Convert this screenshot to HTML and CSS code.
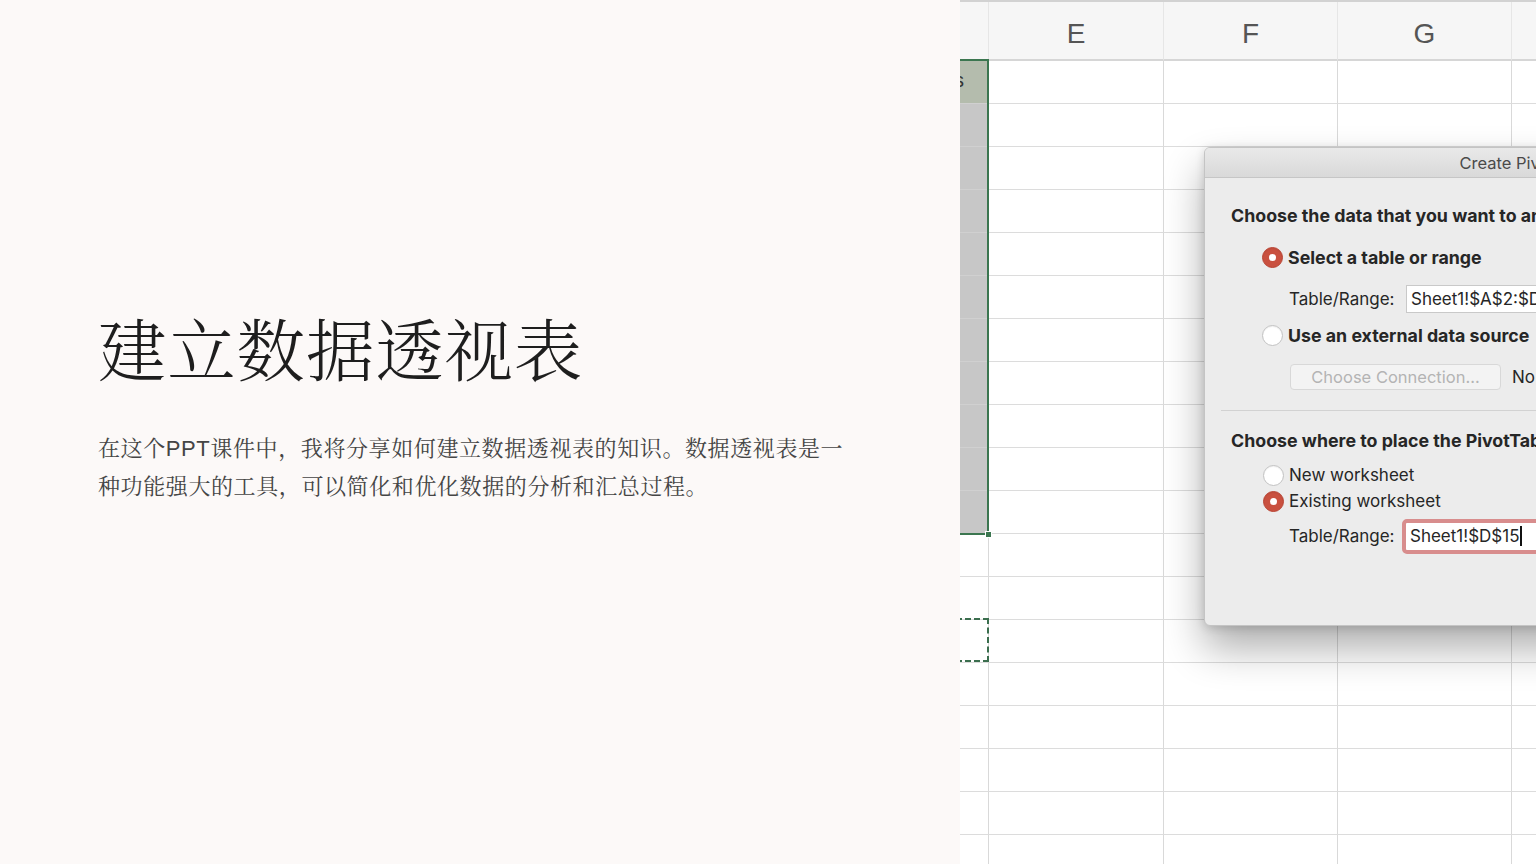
FILE: index.html
```html
<!DOCTYPE html>
<html lang="zh-CN">
<head>
<meta charset="utf-8">
<title>建立数据透视表</title>
<link rel="stylesheet" href="styles.css">
</head>
<body>
<div class="slide">
  <section class="text-panel">
    <h1 class="title">建立数据透视表</h1>
    <p class="desc">在这个PPT课件中，我将分享如何建立数据透视表的知识。数据透视表是一种功能强大的工具，可以简化和优化数据的分析和汇总过程。</p>
  </section>
  <section class="shot">
    <div class="sheet">
      <div class="hd"></div><div class="hd">E</div><div class="hd">F</div><div class="hd">G</div><div class="hd"></div>
      <div class="c sel top"><span class="cut">s</span></div><div class="c"></div><div class="c"></div><div class="c"></div><div class="c"></div>
      <div class="c sel"></div><div class="c"></div><div class="c"></div><div class="c"></div><div class="c"></div>
      <div class="c sel"></div><div class="c"></div><div class="c"></div><div class="c"></div><div class="c"></div>
      <div class="c sel"></div><div class="c"></div><div class="c"></div><div class="c"></div><div class="c"></div>
      <div class="c sel"></div><div class="c"></div><div class="c"></div><div class="c"></div><div class="c"></div>
      <div class="c sel"></div><div class="c"></div><div class="c"></div><div class="c"></div><div class="c"></div>
      <div class="c sel"></div><div class="c"></div><div class="c"></div><div class="c"></div><div class="c"></div>
      <div class="c sel"></div><div class="c"></div><div class="c"></div><div class="c"></div><div class="c"></div>
      <div class="c sel"></div><div class="c"></div><div class="c"></div><div class="c"></div><div class="c"></div>
      <div class="c sel"></div><div class="c"></div><div class="c"></div><div class="c"></div><div class="c"></div>
      <div class="c sel"></div><div class="c"></div><div class="c"></div><div class="c"></div><div class="c"></div>
      <div class="c"></div><div class="c"></div><div class="c"></div><div class="c"></div><div class="c"></div>
      <div class="c"></div><div class="c"></div><div class="c"></div><div class="c"></div><div class="c"></div>
      <div class="c"></div><div class="c"></div><div class="c"></div><div class="c"></div><div class="c"></div>
      <div class="c"></div><div class="c"></div><div class="c"></div><div class="c"></div><div class="c"></div>
      <div class="c"></div><div class="c"></div><div class="c"></div><div class="c"></div><div class="c"></div>
      <div class="c"></div><div class="c"></div><div class="c"></div><div class="c"></div><div class="c"></div>
      <div class="c"></div><div class="c"></div><div class="c"></div><div class="c"></div><div class="c"></div>
      <div class="c"></div><div class="c"></div><div class="c"></div><div class="c"></div><div class="c"></div>
    </div>
    <div class="selection"><span class="handle"></span></div>
    <div class="marquee"></div>

    <div class="dialog">
      <div class="dlg-title">Create PivotTable</div>
      <div class="dlg-body">
        <div class="dlg-heading h1">Choose the data that you want to analyze</div>
        <div class="radio-row r1"><span class="radio on"></span><span class="bold">Select a table or range</span></div>
        <div class="field-row f1"><span class="flabel">Table/Range:</span><span class="input">Sheet1!$A$2:$D$11</span></div>
        <div class="radio-row r2"><span class="radio"></span><span class="bold">Use an external data source</span></div>
        <div class="btn-row"><span class="btn">Choose Connection...</span><span class="note">No data fields have been retrieved.</span></div>
        <div class="sep"></div>
        <div class="dlg-heading h2">Choose where to place the PivotTable report</div>
        <div class="radio-row r3"><span class="radio"></span><span>New worksheet</span></div>
        <div class="radio-row r4"><span class="radio on"></span><span>Existing worksheet</span></div>
        <div class="field-row f2"><span class="flabel">Table/Range:</span><span class="input focus">Sheet1!$D$15<span class="caret"></span></span></div>
      </div>
    </div>
  </section>
</div>
</body>
</html>
```

FILE: styles.css
```css
* { box-sizing: border-box; }
html, body { margin: 0; padding: 0; }
body { width: 1536px; height: 864px; overflow: hidden; background: #fcf9f8; }

.slide { display: flex; width: 1536px; height: 864px; }

.text-panel {
  width: 960px;
  flex: none;
  background: #fcf9f8;
  padding: 305px 0 0 98px;
}
.title {
  margin: 0;
  font-family: "Noto Serif CJK SC", "Noto Sans CJK SC", serif;
  font-weight: 300;
  font-size: 68.5px;
  line-height: 84px;
  color: #1e1e1e;
  letter-spacing: 0.8px;
}
.desc {
  margin: 41px 0 0 0;
  width: 762px;
  font-family: "Liberation Sans", "Noto Serif CJK SC", "Noto Sans CJK SC", sans-serif;
  font-weight: 400;
  font-size: 22px;
  line-height: 38px;
  letter-spacing: 0.6px;
  color: #454545;
}

.shot {
  position: relative;
  width: 576px;
  flex: none;
  overflow: hidden;
  background: #fff;
  font-family: Inter, "Liberation Sans", sans-serif;
}

.sheet {
  display: grid;
  grid-template-columns: 29px 175px 174px 174px 174px;
  grid-template-rows: 59px repeat(19, 43px);
  border-top: 2px solid #d2d2d2;
}
.hd {
  background: #f6f6f6;
  border-right: 1px solid #e6e6e6;
  border-bottom: 2px solid #d6d6d6;
  display: flex;
  align-items: center;
  justify-content: center;
  font-family: "Liberation Sans", sans-serif;
  font-size: 28px;
  color: #555;
  padding-top: 6px;
}
.c {
  border-right: 1px solid #d9d9d9;
  border-bottom: 1px solid #dcdcdc;
  background: #fff;
}
.c.sel { background: #c7c7c7; border-right-color: #c7c7c7; border-bottom-color: #d0d0d0; }
.c.sel.top { background: #b4bcad; position: relative; overflow: hidden; }
.cut {
  position: absolute;
  left: -6px;
  top: 8px;
  font-family: "Liberation Sans", sans-serif;
  font-size: 20px;
  color: #333;
}

.selection {
  position: absolute;
  left: -4px;
  top: 59px;
  width: 33px;
  height: 476px;
  border: 2px solid #3b7650;
}
.handle {
  position: absolute;
  right: -5px;
  bottom: -5px;
  width: 7px;
  height: 7px;
  background: #3b7650;
  border: 1px solid #fff;
}
.marquee {
  position: absolute;
  left: -4px;
  top: 618px;
  width: 33px;
  height: 44px;
  border: 2px dashed #3b6e4e;
}

.dialog {
  position: absolute;
  left: 244px;
  top: 147px;
  width: 648px;
  height: 479px;
  background: #ececec;
  border-radius: 6px;
  border: 1px solid #c4c4c4;
  box-shadow: 0 22px 40px rgba(0,0,0,0.32), 0 2px 10px rgba(0,0,0,0.15);
  overflow: hidden;
}
.dlg-title {
  height: 30px;
  background: linear-gradient(#e9e9e9, #d9d9d9);
  border-bottom: 1px solid #c6c6c6;
  text-align: center;
  font-size: 16.5px;
  line-height: 30px;
  color: #4a4a4a;
}
.dlg-body {
  display: flex;
  flex-direction: column;
  padding: 0 0 0 26px;
  color: #262626;
  font-size: 17px;
}
.dlg-heading {
  height: 20px;
  line-height: 20px;
  font-weight: 700;
  font-size: 17.8px;
  white-space: nowrap;
}
.h1 { margin-top: 28px; }
.h2 { margin-top: 20px; }

.radio-row {
  display: flex;
  align-items: center;
  gap: 5px;
  height: 24px;
  margin-left: 31px;
  white-space: nowrap;
}
.bold { font-weight: 700; font-size: 17.8px; }
.r1 { margin-top: 19px; }
.r2 { margin-top: 10px; }
.r3 { margin-top: 12px; margin-left: 32px; }
.r4 { margin-top: 2px; margin-left: 32px; }

.radio {
  width: 21px;
  height: 21px;
  border-radius: 50%;
  background: #fff;
  border: 1px solid #c2c2c2;
  box-shadow: inset 0 1px 1px rgba(0,0,0,0.06);
  display: flex;
  align-items: center;
  justify-content: center;
  flex: none;
}
.radio.on {
  background: #c9503f;
  border-color: #b94535;
}
.radio.on::after {
  content: "";
  width: 7px;
  height: 7px;
  border-radius: 50%;
  background: #fff;
}

.field-row {
  display: flex;
  align-items: center;
  margin-left: 58px;
  white-space: nowrap;
}
.f1 { margin-top: 16px; height: 28px; }
.f2 { margin-top: 6px; height: 34px; }
.flabel { width: 117px; flex: none; }
.input {
  display: flex;
  align-items: center;
  height: 28px;
  width: 260px;
  padding-left: 4px;
  background: #fff;
  border: 1px solid #c9c9c9;
  flex: none;
}
.input.focus {
  margin-left: -4px;
  height: 35px;
  padding-left: 4px;
  border: 4px solid #d88d8d;
  border-radius: 5px;
}
.caret {
  width: 1.5px;
  height: 20px;
  background: #111;
  margin-left: 1px;
}

.btn-row {
  display: flex;
  align-items: center;
  margin-top: 17px;
  margin-left: 59px;
  height: 26px;
  white-space: nowrap;
}
.btn {
  width: 211px;
  height: 26px;
  line-height: 24px;
  text-align: center;
  background: #f3f3f3;
  border: 1px solid #d8d8d8;
  border-radius: 4px;
  color: #b4b4b4;
  font-size: 16.5px;
  flex: none;
}
.note { margin-left: 11px; color: #262626; }

.sep {
  margin-top: 20px;
  margin-left: -10px;
  height: 1px;
  background: #d2d2d2;
}
```
